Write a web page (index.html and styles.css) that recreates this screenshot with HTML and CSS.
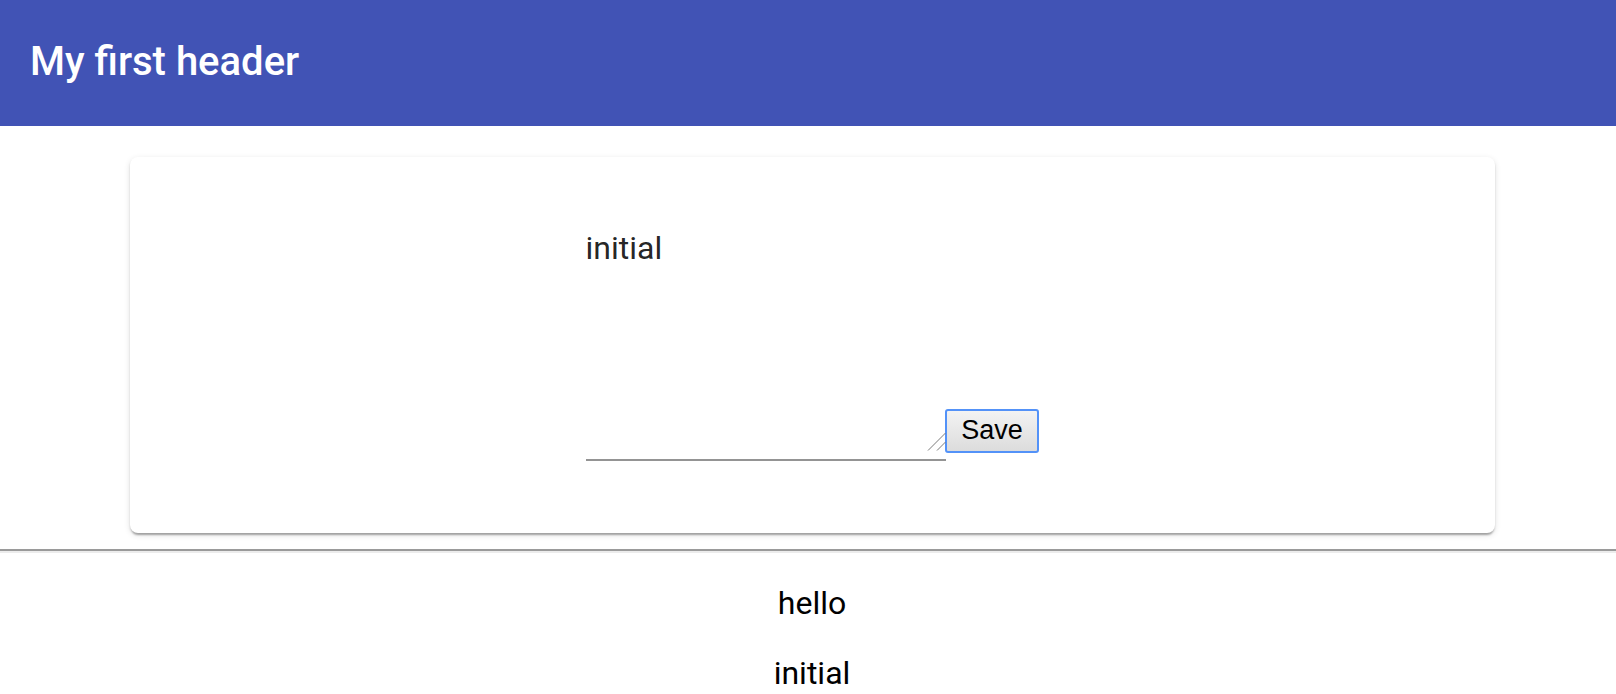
FILE: index.html
```html
<!DOCTYPE html>
<html>
<head>
<meta charset="utf-8">
<title>My first header</title>
<link rel="stylesheet" href="styles.css">
</head>
<body>
<header class="toolbar">
  <span class="toolbar-title">My first header</span>
</header>
<main class="page">
  <section class="card">
    <div class="form">
      <p class="value">initial</p>
      <div class="input-row">
        <span class="field">
          <textarea class="field-input"></textarea>
          <svg class="grip" width="20" height="20" viewBox="0 0 20 20">
            <line x1="2" y1="19.5" x2="19.5" y2="2" />
            <line x1="11" y1="19.5" x2="19.5" y2="11" />
          </svg>
        </span>
        <button class="save-btn">Save</button>
      </div>
    </div>
  </section>
</main>
<hr class="divider">
<section class="output">
  <p class="line">hello</p>
  <p class="line">initial</p>
</section>
</body>
</html>
```
FILE: styles.css
```css
html, body {
  margin: 0;
  padding: 0;
  background: #ffffff;
  font-family: Roboto, "Noto Sans", Arial, sans-serif;
  color: #000;
}

.toolbar {
  height: 126px;
  background: #4153b5;
  display: flex;
  align-items: center;
  padding: 0 30px 3px;
  box-sizing: border-box;
}

.toolbar-title {
  color: #ffffff;
  font-size: 40px;
  font-weight: 500;
  line-height: 47px;
}

.page {
  padding: 31px 0 16px 8px;
}

.card {
  width: 1365px;
  margin: 0 auto;
  box-sizing: border-box;
  background: #fff;
  border-radius: 8px;
  padding: 72px 0;
  box-shadow: 0 4px 2px -2px rgba(0,0,0,.2), 0 2px 2px 0 rgba(0,0,0,.14), 0 2px 6px 0 rgba(0,0,0,.12);
  display: flex;
  flex-direction: column;
  align-items: center;
}

.form {
  display: flex;
  flex-direction: column;
  align-items: flex-start;
}

.value {
  margin: 0 0 134px;
  font-size: 32px;
  line-height: 38px;
  color: rgba(0,0,0,.87);
}

.input-row {
  display: flex;
  align-items: flex-end;
}

.field {
  position: relative;
  display: block;
  width: 360px;
  height: 60px;
}

.field-input {
  display: block;
  width: 360px;
  height: 60px;
  box-sizing: border-box;
  border: none;
  border-bottom: 2px solid #949494;
  outline: none;
  resize: none;
  background: transparent;
  font-family: Roboto, Arial, sans-serif;
  font-size: 32px;
  padding: 0;
  margin: 0;
}

.grip {
  position: absolute;
  right: 0;
  bottom: 10px;
}

.grip line {
  stroke: #7a7a7a;
  stroke-width: 1;
}

.save-btn {
  margin: 0 0 8px -1px;
  width: 94px;
  height: 44px;
  box-sizing: border-box;
  border: 2px solid #5392f8;
  border-radius: 3px;
  background: linear-gradient(#f3f3f3, #dcdcdc);
  font-family: "Liberation Sans", Arial, sans-serif;
  font-size: 27px;
  color: #000;
  padding: 0 0 1px 1px;
  display: flex;
  align-items: center;
  justify-content: center;
  line-height: 1;
}

.divider {
  margin: 0;
  border: none;
  border-top: 2px solid #9a9a9a;
  border-bottom: 2px solid #ececec;
  height: 0;
}

.output {
  padding-left: 8px;
  text-align: center;
}

.line {
  font-size: 32px;
  line-height: 38px;
  margin: 31px 0 0;
}

.line + .line {
  margin-top: 32px;
}
```
